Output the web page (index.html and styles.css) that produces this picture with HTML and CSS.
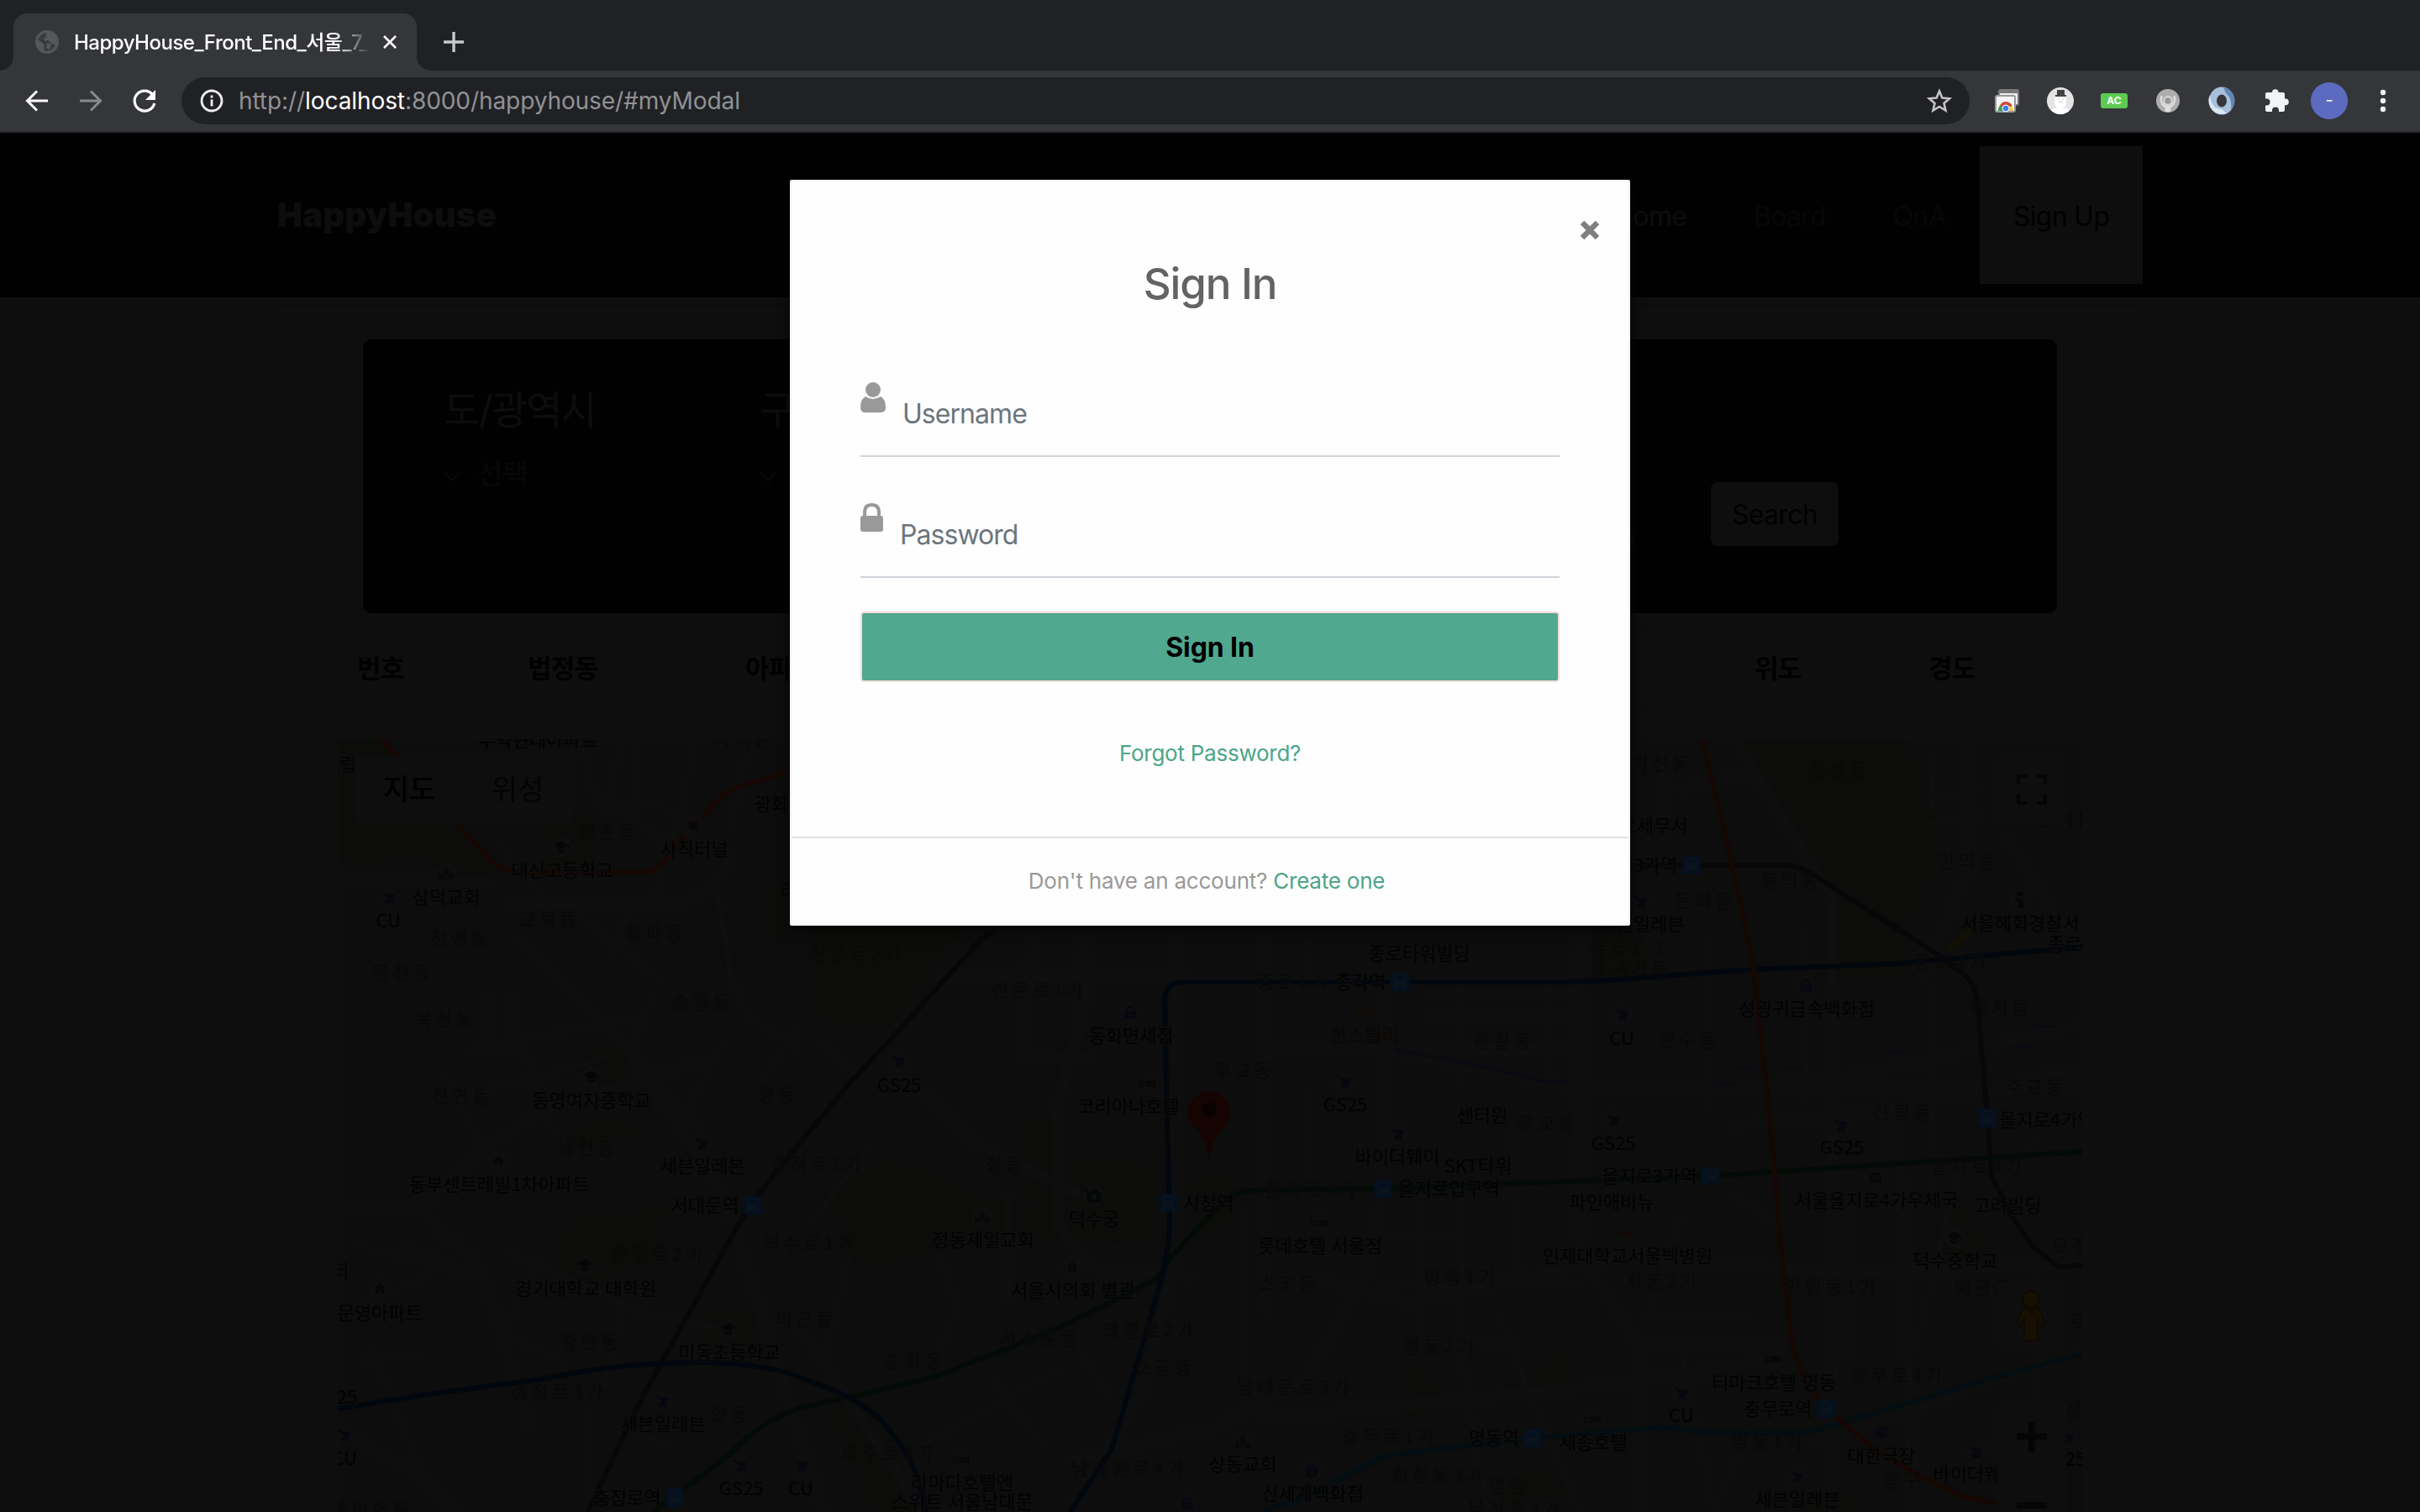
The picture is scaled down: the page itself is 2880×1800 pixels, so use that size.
FILE: index.html
```html
<!DOCTYPE html>
<html lang="ko">
<head>
<meta charset="utf-8">
<title>HappyHouse_Front_End_서울_7</title>
<link rel="stylesheet" href="styles.css">
</head>
<body>
<div class="browser">
  <div class="tabstrip">
    <div class="tab">
      <svg class="globe" viewBox="0 0 28 28"><circle cx="14" cy="14" r="14" fill="#55575b"/><path d="M13 3c-6 1-9 5-9.500 9l4 2 3 3v7c6 2 12-1 13-7l-4-1-4-4-4 1-2-3 4-2z" fill="#38393d"/><path d="M12 7l4-4 5 3-3 4zM14 15l5 1-2 7-4-2z" fill="#55575b"/></svg>
      <span class="tab-title">HappyHouse_Front_End_서울_7_</span>
      <svg class="tab-close" viewBox="0 0 16 16"><path d="M1 1l14 14M15 1L1 15" stroke="#fff" stroke-width="2.600"/></svg>
    </div>
    <svg class="tab-new" viewBox="0 0 24 24"><path d="M12 0v24M0 12h24" stroke="#c6c9cd" stroke-width="3.400"/></svg>
  </div>
  <div class="toolbar">
    <div class="nav-icons">
      <svg viewBox="0 0 32 32"><path d="M29 16H5M16 4.500L4.500 16 16 27.500" fill="none" stroke="#fff" stroke-width="3"/></svg>
      <svg viewBox="0 0 32 32"><path d="M3 16h24M16 4.500L27.500 16 16 27.500" fill="none" stroke="#88898c" stroke-width="3"/></svg>
      <svg viewBox="0 0 32 32"><path d="M25.500 8.500A12 12 0 1 0 27.800 19" fill="none" stroke="#fff" stroke-width="3.200"/><path d="M29 3v12H17z" fill="#fff"/></svg>
    </div>
    <div class="omnibox">
      <svg class="info" viewBox="0 0 28 28"><circle cx="14" cy="14" r="12" fill="none" stroke="#eee" stroke-width="2.800"/><path d="M14 12.500v8M14 7.500v3" stroke="#eee" stroke-width="2.800"/></svg>
      <span class="url">http://<b>localhost</b>:8000/happyhouse/#myModal</span>
      <svg class="star" viewBox="0 0 30 30"><path d="M15 3.500l3.400 8 8.600.8-6.500 5.700 2 8.500L15 22l-7.500 4.500 2-8.500L3 12.300l8.600-.8z" fill="none" stroke="#c4c4c4" stroke-width="2.600"/></svg>
    </div>
    <div class="extensions">
      <svg viewBox="0 0 64 64"><rect x="23" y="19" width="23" height="18" rx="2" fill="#eee" stroke="#777" stroke-width="2"/><rect x="23" y="19" width="23" height="4" fill="#777"/><rect x="19" y="26" width="23" height="19" rx="2" fill="#f4f4f4" stroke="#999" stroke-width="2"/><path d="M22 44a9 9 0 0 1 18 0z" fill="#f6c944"/><path d="M22 44a9 9 0 0 1 4-8l5 8z" fill="#3c9e5a"/><path d="M24 38q2-5 7-5t8 5l-8 2z" fill="#d04a3a"/><circle cx="31" cy="41" r="4" fill="#3f7fea" stroke="#fff"/></svg>
      <svg viewBox="0 0 64 64"><circle cx="32" cy="32" r="16" fill="#e4e4e4"/><path d="M26 27h13v7q0 5-4 6 7 1 7.500 4a16 16 0 0 1-21 0q1-3 7.500-4-4-1-4-6z" fill="#fff"/><path d="M28 19h9v6h2v2H26v-2h2z" fill="#444"/><path d="M29 30h2m3 0h2m-6 3q2.500 2 5 0" stroke="#ccc" fill="none"/></svg>
      <span class="ext-ac">AC</span>
      <svg viewBox="0 0 64 64"><circle cx="32" cy="32" r="14" fill="#adadad"/><path d="M24.500 26q-2 8 3 12 3 1 4.500 1t4.500-1q5-4 3-12" fill="none" stroke="#dedede" stroke-width="2.500"/><path d="M28 38h8l-1 7h-6z" fill="#dedede"/><path d="M32 26.500l4.500 2.700v5.500L32 37.500l-4.500-2.800v-5.500z" fill="#999" stroke="#dedede" stroke-width="1.600"/></svg>
      <svg viewBox="0 0 64 64"><ellipse cx="32" cy="32" rx="10.500" ry="12" fill="none" stroke="#a6bfdb" stroke-width="9"/><path d="M34 16a16 16 0 0 1 9 27q2-14-6-20z" fill="#5f86b5"/><path d="M18 25q1 16 14 17l6 5a16 16 0 0 1-20-22z" fill="#dbe6f2"/></svg>
      <svg viewBox="0 0 64 64"><path d="M28 22a3.800 3.800 0 0 1 7.600 0v0h5.400a2 2 0 0 1 2 2v5.600h1a3.800 3.800 0 0 1 0 7.600h-1V43a2 2 0 0 1-2 2h-5v-1.500a4 4 0 0 0-8 0V45h-6a2 2 0 0 1-2-2v-5.500h1.500a4 4 0 0 0 0-8H20V24a2 2 0 0 1 2-2z" fill="#f1f3f4"/></svg>
      <span class="avatar"><i>-</i></span>
      <svg viewBox="0 0 64 64"><g fill="#f1f3f4"><circle cx="32" cy="22" r="3.200"/><circle cx="32" cy="32" r="3.200"/><circle cx="32" cy="42" r="3.200"/></g></svg>
    </div>
  </div>
</div>

<main class="page">
  <header class="navbar">
    <a class="brand">HappyHouse</a>
    <nav class="menu"><a class="on">Home</a><a>Board</a><a>QnA</a><a class="signup">Sign Up</a></nav>
  </header>
  <section class="sheet">
    <form class="finder">
      <div class="field"><h3>도/광역시</h3><p><svg viewBox="0 0 20 12"><path d="M1 1l9 9 9-9" fill="none" stroke="#090909" stroke-width="2.500"/></svg><span>선택</span></p></div>
      <div class="field"><h3>구</h3><p><svg viewBox="0 0 20 12"><path d="M1 1l9 9 9-9" fill="none" stroke="#090909" stroke-width="2.500"/></svg><span>선택</span></p></div>
      <span class="knob"></span>
      <span class="search">Search</span>
    </form>
    <div class="thead"><span>번호</span><span>법정동</span><span>아파트</span><span>위도</span><span>경도</span></div>
    <svg class="map" viewBox="402 880 2076 920">
      <defs>
        <g id="train"><rect x="-11" y="-11" width="22" height="22" rx="3" fill="#04101d"/><path d="M-6-6q0-2 3-2h6q3 0 3 2V3q0 2-2 2h-8q-2 0-2-2zM-4 5l-3 4M4 5l3 4" fill="none" stroke="#0c151e" stroke-width="1.500"/><path d="M-5-1H5v5H-5z" fill="#0b131b"/></g>
        <g id="cart"><circle r="13" fill="#0e0e0e"/><path d="M-8-6h3l1 2H7L5 2h-7l-1 3H6" fill="#07080f" stroke="#07080f" stroke-width="1.500"/><circle cx="-2" cy="6" r="1.500" fill="#07080f"/><circle cx="4" cy="6" r="1.500" fill="#07080f"/></g>
        <g id="cap"><circle r="13" fill="#0e0e0e"/><path d="M0-7l9 5-9 5-9-5zM-5 2l5 3 5-3v3l-5 3-5-3zM8-2h1.500v7H8z" fill="#060606"/></g>
        <g id="church"><circle r="13" fill="#0e0e0e"/><path d="M-9 7V1q2.500-3 5 0v6zM4 7V1q2.500-3 5 0v6zM-3-3q3-7 6 0V7H1V2H-1v5h-2z" fill="#0a0707"/></g>
        <g id="home"><circle r="13" fill="#0e0e0e"/><path d="M0-6l7 6H5v6H1V2H-1v4h-4V0h-2z" fill="#080606"/></g>
        <g id="bag"><circle r="13" fill="#0e0e0e"/><path d="M-7-2H7V7H-7z" fill="#07080f"/><path d="M-4-2q0-5 4-5t4 5" fill="none" stroke="#07080f" stroke-width="1.800"/><path d="M-3 1q3 4 6 0" fill="none" stroke="#0f0f0f" stroke-width="1.500"/></g>
        <g id="bed"><circle r="13" fill="#0e0e0e"/><path d="M-9-6v11M-9 3H9V-3H-1v6M9 5V0" fill="#0a0806" stroke="#0a0806" stroke-width="1.800"/><circle cx="-5" cy="-2" r="2" fill="#0a0806"/></g>
      </defs>
      <rect x="402" y="880" width="2076" height="920" fill="#0d0d0d"/>
      <g class="park">
        <path d="M402 880h54l130 160-10 35-84-60-50 20-40-10z"/><path d="M650 965h30l35 10-10 50-60 15z"/><path d="M845 1070l30 30 5 90-20-40zM910 1060l30-20v120l-20-30z"/>
        <path d="M678 1265l60-35 30 45-40 30zM675 1345l60-20 30 28-80 12zM677 1447l120-10-10 60-90 30-40-10z"/><path d="M835 1560h65l-10 50h-50z"/>
        <path d="M960 1105h190l-90 120-100-12zM980 1420l80-40 160 60v30l-200 40z"/><path d="M1218 1330h30l30 45 100 10v90l-130 10-25-20zM1262 1228h40l-20 70-40-10zM1409 1410l60-20v60l-40 20zM985 1680l60-10 50 130h-60z"/>
        <path d="M2070 880h195l40 60v100l-25 45-10 80-105 5V1040z"/><path d="M2305 1450l40-15 20 60h-70zM1660 1635l45-10 10 55-40 10zM1795 1650l70-50 10 50-60 15zM1820 1740l60 40-100 10zM1895 1105h60v60h-60z"/>
        <path d="M2120 1800l80-30 20 30zM2460 1750h18v50h-18z"/>
      </g>
      <g class="road thick">
        <path d="M620 1120L740 1240 860 1420 980 1800M950 1580L1100 1800M402 1050h180M610 1075h200q50-20 60-60M1120 1165h300M1230 1110v70M1290 1110v90l-30 110 0 150 40 50 120 10"/><path d="M402 1440h100l70 70 60 190M510 1430l60-60 80-50 200-60M560 1515l-80-30"/>
        <path d="M1400 1100v400l-40 160-90 140M1505 1110v450M1650 1170l-5 250-20 100-70 120-110 60-170 40M1500 1245l150 5 230 45h598M1880 1110v380l70 110v200M1640 1250h230"/>
        <path d="M2000 940l80-20M2070 890l110 180v700M2010 1300l200-20 268-60M2340 880v160l-50 120M1950 1500l250 15 278-10M2258 1320l20 480M1500 1690l400-40 200-30M402 1700l100 60 40 40"/>
        <path d="M2160 1720l220-80 98-30M2390 1000l88 140M2060 1340l200-20 218-50M1560 1520l110 30 300-60M1100 1300l60 60 120 60M1220 1150v110h80"/>
      </g>
      <g class="road">
        <path d="M690 880l20 80 80 0 40 50M740 880l-20 90M760 880l-10 120M830 880l-30 120M870 990l20-110M590 1000l50 60M700 940l90 60-10 70M690 1090l100 80M750 1080l-20 60M850 1040l20 120 20 50 60 40"/>
        <path d="M580 1180v70h30v-70M560 1250l200-40M570 1300l150-40M620 1240l40 110M530 1280l40 80M420 1480l140 40M410 1560l100-40M430 1620l70-10M440 1600l60 150M500 1440l30 40M640 1500l-40 90 70 30M600 1490l140 60-20 100M750 1560l100 20M700 1680v120M740 1700l60 20"/>
        <path d="M780 1180l-30 70 80 90M860 1240l-40 80M900 1300l50-80M980 1240l40 40M1030 1370l-60 80M1120 1500l20 60-30 60M1200 1420v130M1010 1500l-30 120M1280 1600l40 60M1180 1640l60 80M1100 1720l160-90"/>
        <path d="M1560 1120v40M1740 1170v120M1845 1170v120M1700 1180h180M1700 1210h180M1740 1420v200l30 180M1690 1420v180M1640 1530h240M1640 1470h100M1800 1330v90l10 100M1560 1300v110M1480 1440v200M1780 1560l100 240M1690 1600h120"/>
        <path d="M1980 900v100M2030 1120v200M2150 1110v200M2240 1290v120M2300 1180v240M2300 900v60M2300 950l60-10M2300 980l60-10M2400 900l40 60M2000 1450l-40 120M2060 1420l60 40M2000 1600l40 200M1950 1600h180M1960 1570h120M1960 1640h130M2200 1420v200M2330 1400l-50 200M2420 1500v180M2400 1680l-60 70M2080 1700l-30 80M2360 1440l60-80"/>
      </g>
      <g class="line">
        <path class="l3" d="M454 880L584 1025Q595 1035 615 1038.500H768Q780 1038 792 1024L815 994M834 974L858 948 870 940 928 922 950 900"/>
        <path class="l5" d="M699 1800L766 1660 829 1547 879 1457 904 1420 950 1363 1009 1292 1073 1223 1146 1142 1168 1118 1195 1100M1940 1030H2125Q2142 1030 2168 1048L2304 1135 2340 1162Q2351 1172 2354 1200L2366 1340 2370 1400 2394 1448 2420 1485 2451 1509 2478 1506"/>
        <path class="l2" d="M777 1800L815 1772 870 1730Q905 1692 950 1677L1110 1640 1202 1604 1261 1580 1343 1540 1377 1522 1393 1497 1443 1444Q1465 1418 1490 1417L1640 1415 1850 1407 2036 1400 2200 1389 2478 1371"/>
        <path class="l1" d="M402 1677L508 1660 650 1641Q735 1624 793 1623 910 1618 960 1643 1040 1670 1062 1708 1090 1735 1102 1800M1273 1800L1323 1725 1368 1573 1384 1515Q1393 1475 1392 1448L1389 1341 1386 1189Q1388 1168 1411 1169L1860 1169Q1920 1168 1990 1161L2090 1154 2260 1147 2478 1127"/>
        <path class="l4" d="M1500 1800L1553 1783 1643 1736Q1655 1731 1670 1730L1824 1712 1977 1699Q2000 1701 2025 1706H2150L2372 1640 2478 1612"/>
        <path class="l3" d="M2026 880L2060 1025 2085 1140 2091 1190 2107 1340 2120 1490 2133 1600 2150 1650 2183 1685 2230 1725 2290 1760 2337 1782 2378 1789"/>
        <path d="M2318 1132L2345 1108" stroke="#121004" stroke-width="10"/>
      </g>
      <g class="lane"><path d="M1660 1250q110 18 180 38h26"/><path d="M2067 1271h24M2120 1272h24M2246 1253h26M2422 1222h26M2396 1246h26M2040 1291h26"/></g>
      <g class="area">
        <text x="724" y="998">행촌동</text><text x="548" y="1125">천연동</text><text x="654" y="1102">교북동</text><text x="780" y="1118">홍파동</text><text x="479" y="1165">영천동</text><text x="530" y="1221">옥천동</text><text x="836" y="1201">송월동</text><text x="550" y="1313">천연동</text><text x="926" y="1311">평동</text><text x="886" y="888">사직동</text>
        <text x="699" y="1374">냉천동</text><text x="973" y="1394">충정로1가</text><text x="964" y="1488">의주로1가</text><text x="784" y="1501">충정로2가</text><text x="959" y="1578">미근동</text><text x="703" y="1605">충현동</text><text x="665" y="1665">충정로3가</text><text x="869" y="1691">합동</text><text x="443" y="1805">북아현동</text>
        <text x="1020" y="1144">신문로2가</text><text x="1237" y="1186">신문로1가</text><text x="1481" y="1282">무교동</text><text x="1197" y="1394">정동</text><text x="1238" y="1601">서소문동</text><text x="1368" y="1592">태평로2가</text><text x="1089" y="1628">순화동</text><text x="1386" y="1636">소공동</text><text x="1058" y="1738">의주로2가</text><text x="1344" y="1756">남대문로4가</text><text x="1541" y="1659">남대문로3가</text>
        <text x="1540" y="1177">종로1가</text><text x="1789" y="1247">관철동</text><text x="1842" y="1345">장교동</text><text x="1561" y="1424">을지로1가</text><text x="1534" y="1536">소공동</text><text x="1739" y="1528">명동1가</text><text x="1979" y="1534">저동2가</text><text x="1714" y="1611">명동2가</text><text x="1654" y="1718">충무로1가</text><text x="1713" y="1764">회현동3가</text><text x="1796" y="1776">명동</text><text x="1804" y="1804">남산동2가</text><text x="1943" y="1138">종로1.2.</text><text x="1943" y="1161">3.4가동</text><text x="2010" y="1246">관수동</text>
        <text x="1978" y="917">익선동</text><text x="2189" y="925">훈정동</text><text x="2132" y="1056">봉익동</text><text x="2029" y="1080">돈의동</text><text x="2342" y="1033">인의동</text><text x="2323" y="1153">종로4가</text><text x="2382" y="1207">예지동</text><text x="2265" y="1332">산림동</text><text x="2423" y="1302">주교동</text><text x="2354" y="1396">을지로4가</text><text x="2478" y="1491">오장동</text><text x="2180" y="1540">인현동1가</text><text x="2362" y="1541">예관동</text><text x="2259" y="1645">충무로4가</text><text x="2105" y="1725">필동1가</text><text x="2265" y="1770">중구</text><text x="2475" y="1581">로</text><text x="2469" y="1686">정</text><text x="2460" y="983">연지동</text>
      </g>
      <g class="poi">
        <text x="640" y="889">무악현대아파트</text><text x="404" y="918">독립</text><text x="826" y="1019">사직터널</text><text x="928" y="965">광화문</text><text x="669" y="1044">대신고등학교</text><text x="531" y="1076">삼덕교회</text><text x="462" y="1104">CU</text><text x="704" y="1318">동명여자중학교</text><text x="939" y="1068">라</text>
        <text x="594" y="1418">동부센트레빌1차아파트</text><text x="836" y="1396">세븐일레븐</text><text x="839" y="1443">서대문역</text><text x="405" y="1521">터</text><text x="697" y="1542">경기대학교 대학원</text><text x="452" y="1571">문영아파트</text><text x="868" y="1618">미동초등학교</text><text x="413" y="1671">25</text><text x="410" y="1744">CU</text><text x="789" y="1703">세븐일레븐</text><text x="746" y="1791">충정로역</text><text x="882" y="1780">GS25</text><text x="953" y="1780">CU</text>
        <text x="1346" y="1241">동화면세점</text><text x="1070" y="1300">GS25</text><text x="1343" y="1325">코리아나호텔</text><text x="1302" y="1459">덕수궁</text><text x="1438" y="1440">시청역</text><text x="1170" y="1484">정동제일교회</text><text x="1277" y="1544">서울시의회 별관</text><text x="1145" y="1773">라마다호텔앤</text><text x="1145" y="1796">스위트 서울남대문</text><text x="1479" y="1751">상동교회</text>
        <text x="1689" y="1143">종로타워빌딩</text><text x="1619" y="1177">종각역</text><text x="1624" y="1240" class="food">한스델리</text><text x="1930" y="1244">CU</text><text x="1601" y="1323">GS25</text><text x="1764" y="1336">센터원</text><text x="1920" y="1369">GS25</text><text x="1663" y="1385">바이더웨이</text><text x="1759" y="1396">SKT타워</text><text x="1724" y="1423">을지로입구역</text><text x="1963" y="1408">을지로3가역</text><text x="1918" y="1439">파인애비뉴</text><text x="1571" y="1491">롯데호텔 서울점</text><text x="1937" y="1503">인제대학교서울백병원</text><text x="1778" y="1720">명동역</text><text x="1896" y="1725">세종호텔</text><text x="1562" y="1786">신세계백화점</text><text x="2001" y="1693">CU</text><text x="1954" y="1108">세븐일레븐</text>
        <text x="1958" y="991">종로세무서</text><text x="1950" y="1038">종로3가역</text><text x="2404" y="1107">서울혜화경찰서</text><text x="2457" y="1132">종로</text><text x="2150" y="1209">성광귀금속백화점</text><text x="2436" y="1341">을지로4가역</text><text x="2192" y="1374">GS25</text><text x="2233" y="1437">서울을지로4가우체국</text><text x="2389" y="1443">고려빌딩</text><text x="2327" y="1509">덕수중학교</text><text x="2111" y="1654">티마크호텔 명동</text><text x="2116" y="1685">충무로역</text><text x="2239" y="1741">대한극장</text><text x="2351" y="1763">바이더웨이</text><text x="2139" y="1793">세븐일레븐</text><text x="2470" y="1745">25</text>
      </g>
      <circle cx="825" cy="983" r="13" fill="#0e0e0e"/><rect x="820" y="978" width="10" height="10" fill="#0b0607"/>
      <use href="#cap" x="668" y="1008"/><use href="#cap" x="703" y="1282"/><use href="#cap" x="696" y="1506"/><use href="#cap" x="867" y="1582"/><use href="#cap" x="2326" y="1473"/><use href="#church" x="531" y="1040"/><use href="#church" x="1169" y="1449"/><use href="#church" x="1479" y="1717"/>
      <use href="#cart" x="462" y="1069"/><use href="#cart" x="835" y="1362"/><use href="#cart" x="410" y="1709"/><use href="#cart" x="788" y="1668"/><use href="#cart" x="881" y="1745"/><use href="#cart" x="953" y="1745"/><use href="#cart" x="1069" y="1264"/><use href="#cart" x="1930" y="1208"/><use href="#cart" x="1600" y="1288"/><use href="#cart" x="1920" y="1334"/><use href="#cart" x="1663" y="1350"/><use href="#cart" x="2001" y="1659"/><use href="#cart" x="1952" y="1074"/><use href="#cart" x="2191" y="1340"/><use href="#cart" x="2351" y="1729"/><use href="#cart" x="2138" y="1758"/><use href="#cart" x="2460" y="1712"/>
      <use href="#home" x="593" y="1382"/><use href="#home" x="452" y="1534"/><use href="#home" x="1276" y="1508"/><use href="#bag" x="1345" y="1206"/><use href="#bag" x="1413" y="1790"/><use href="#bag" x="1561" y="1751"/><use href="#bag" x="2149" y="1174"/>
      <use href="#bed" x="1366" y="1290"/><use href="#bed" x="1144" y="1738"/><use href="#bed" x="1570" y="1456"/><use href="#bed" x="1895" y="1690"/><use href="#bed" x="2110" y="1618"/>
      <use href="#train" x="896" y="1435"/><use href="#train" x="803" y="1783"/><use href="#train" x="1390" y="1432"/><use href="#train" x="1666" y="1169"/><use href="#train" x="1646" y="1415"/><use href="#train" x="2036" y="1400"/><use href="#train" x="1824" y="1712"/><use href="#train" x="2013" y="1030"/><use href="#train" x="2365" y="1331"/><use href="#train" x="2173" y="1677"/>
      <circle cx="1301" cy="1424" r="13" fill="#0e0e0e"/><path d="M1294 1420h4l2-3h5l2 3h3v11h-16zM1289 1418h6M1292 1415v6" fill="#050808" stroke="#050808" stroke-width="1.500"/><circle cx="1302" cy="1425" r="3" fill="#0f0f0f"/>
      <path d="M1618 1197v14M1615 1197v5h6v-5M1628 1197q-4 5 0 7v7" fill="none" stroke="#130b03" stroke-width="2.500"/><path d="M1936 1459v18M1927 1468h18" stroke="#150504" stroke-width="2"/><circle cx="2232" cy="1402" r="13" fill="#0e0e0e"/><path d="M2225 1396h14v12h-14z" fill="#080705"/><path d="M2225 1397l7 6 7-6" fill="none" stroke="#0f0f0f" stroke-width="1.500"/><circle cx="2404" cy="1071" r="13" fill="#0e0e0e"/><path d="M2401 1062h6v4h-6zM2407 1069v11h-5l2-6-7-5" fill="#070606" stroke="#070606" stroke-width="1.500"/><path d="M2232 1698h14v14h-14z" fill="#07080f"/><path d="M2235.500 1698v14M2242.500 1698v14" stroke="#0f0f0f" stroke-dasharray="2"/>
      <path d="M1439 1379q-2-18-14-34a25 25 0 1 1 28 0q-12 16-14 34z" fill="#150402"/><circle cx="1439" cy="1321" r="8.500" fill="#0a0101"/>
      <g class="control"><rect x="422" y="900" width="260" height="80" rx="3"/><rect x="2378" y="900" width="80" height="80" rx="3"/><rect x="2378" y="1526" width="80" height="80" rx="3"/><rect x="2378" y="1670" width="80" height="140" rx="3"/></g>
      <path d="M551.500 902v76M2388 1751h60" stroke="#0c0c0c" stroke-width="1.500"/>
      <text class="ctl active" x="487" y="952">지도</text><text class="ctl" x="616" y="952">위성</text>
      <path d="M2402 934v-10h10M2424 924h10v10M2434 946v10h-10M2412 956h-10v-10" fill="none" stroke="#050505" stroke-width="4"/>
      <path d="M2418 1692v36M2400 1710h36M2400 1792h36" stroke="#050505" stroke-width="8"/>
      <path d="M2409 1557h16q5 4 8 20l-3 2-5-9v26h-16v-26l-5 9-3-2q3-16 8-20z" fill="#151001" stroke="#0c0801" stroke-width="1.500"/><circle cx="2417" cy="1547" r="10" fill="#151001" stroke="#0c0801" stroke-width="1.500"/><path d="M2412 1557h10l-5 9z" fill="#150802"/>
    </svg>
  </section>

  <div class="modal">
    <svg class="modal-close" viewBox="0 0 24 24"><path d="M3 3l18 18M21 3L3 21" stroke="#808080" stroke-width="6.500"/></svg>
    <h4>Sign In</h4>
    <div class="entry"><svg class="user" viewBox="0 0 30 36"><ellipse cx="15" cy="9" rx="9" ry="9" fill="#999"/><path d="M6 17q9 6 18 0 6 3 6 13 0 6-6 6H6q-6 0-6-6 0-10 6-13z" fill="#999"/></svg><span>Username</span></div>
    <div class="entry second"><svg class="lock" viewBox="0 0 27 34"><path d="M5 17v-6q0-9 8.500-9t8.500 9v6" fill="none" stroke="#999" stroke-width="4"/><rect y="15" width="27" height="19" rx="3" fill="#999"/></svg><span>Password</span></div>
    <div class="submit">Sign In</div>
    <a class="forgot">Forgot Password?</a>
    <footer>Don't have an account? <a>Create one</a></footer>
  </div>
</main>
</body>
</html>
```

FILE: styles.css
```css
* { box-sizing: border-box; }
body { margin: 0; width: 2880px; height: 1800px; overflow: hidden; background: #0e0e0e; font-family: Inter, "Noto Sans CJK KR", sans-serif; }
svg { display: block; flex: none; }
h3, h4, p { margin: 0; font-weight: 400; }

/* browser frame */
.browser { height: 158px; background: #35363a; border-bottom: 2px solid #28292b; }
.tabstrip { height: 84px; background: #202124; display: flex; padding: 16px 0 0 16px; }
.tab { position: relative; width: 480px; height: 68px; background: #35363a; border-radius: 16px 16px 0 0; display: flex; align-items: center; padding-left: 26px; }
.tab::before, .tab::after { content: ""; position: absolute; bottom: 0; width: 16px; height: 16px; }
.tab::before { left: -16px; background: radial-gradient(circle at 0 0, #202124 15.500px, #35363a 16px); }
.tab::after { right: -16px; background: radial-gradient(circle at 100% 0, #202124 15.500px, #35363a 16px); }
.globe { width: 28px; height: 28px; }
.tab-title { width: 354px; margin: -3px 0 0 18px; color: #fff; font-size: 24px; font-weight: 500; letter-spacing: -.5px; white-space: nowrap; overflow: hidden; -webkit-mask-image: linear-gradient(90deg, #000 310px, transparent 352px); mask-image: linear-gradient(90deg, #000 310px, transparent 352px); }
.tab-close { width: 16px; height: 16px; margin-left: 14px; }
.tab-new { width: 24px; height: 24px; margin: 22px 0 0 32px; }
.toolbar { height: 72px; display: flex; align-items: center; padding: 0 12px 0 28px; }
.nav-icons { display: flex; gap: 32px; }
.nav-icons svg { width: 32px; height: 32px; }
.omnibox { flex: 1; height: 56px; margin: 0 12px 0 28px; border-radius: 28px; background: #202124; display: flex; align-items: center; padding: 0 21px 0 22px; }
.info { width: 28px; height: 28px; }
.url { flex: 1; margin-left: 18px; font-size: 28px; letter-spacing: -.08px; color: #919295; }
.url b { font-weight: 400; color: #fff; }
.star { width: 30px; height: 30px; }
.extensions { display: flex; align-items: center; }
.extensions svg { width: 64px; height: 64px; }
.ext-ac { width: 32px; height: 18px; margin: 0 16px; border-radius: 3px; background: #5dcb51; color: #fff; font-size: 12px; font-weight: 700; line-height: 18px; text-align: center; }
.avatar { width: 44px; height: 44px; margin: 0 10px; border-radius: 50%; background: #5c6bc0; color: #fff; font-size: 20px; line-height: 42px; text-align: center; }
.avatar i { font-style: normal; }

/* page under the backdrop */
.page { position: relative; height: 1642px; overflow: hidden; }
.navbar { height: 196px; background: #010101; padding: 0 330px 0 330px; display: flex; justify-content: space-between; }
.brand { color: #0d0d0d; font-size: 40px; font-weight: 900; line-height: 196px; letter-spacing: .2px; }
.menu { display: flex; padding: 16px 0; }
.menu a { padding: 0 40px; color: #070707; font-size: 32px; line-height: 167px; height: 164px; letter-spacing: -.75px; }
.menu .on { color: #0d0d0d; }
.menu .signup { background: #0e0e0e; color: #010101; }
.sheet { width: 2220px; height: 1500px; margin: 8px 0 0 330px; border: 2px solid #0c0c0c; border-radius: 10px; padding: 40px 70px 0; }
.finder { width: 2016px; height: 326px; margin-left: 30px; border-radius: 10px; background: #010101; display: flex; padding: 52px 0 0 96px; }
.field { width: 376px; }
.field h3 { color: #0d0d0d; font-size: 47px; line-height: 64px; letter-spacing: -1.800px; }
.field p { display: flex; align-items: center; gap: 20px; height: 32px; margin-top: 32px; color: #080808; font-size: 33px; }
.field p svg { width: 20px; height: 12px; }
.field p span { line-height: 40px; margin-top: -8px; }
.knob { width: 40px; height: 40px; margin: 167px 90px 0 626px; border-radius: 50%; border: 4px solid #060606; background: #0c0c0c; }
.search { width: 152px; height: 76px; margin-top: 118px; border-radius: 8px; background: #0e0e0e; color: #010101; font-size: 32px; line-height: 77px; text-align: center; letter-spacing: -.7px; }
.thead { width: 2072px; height: 100px; margin-top: 16px; border-top: 2px solid #0c0c0c; border-bottom: 2px solid #0c0c0c; display: grid; grid-template-columns: 203px 259px 1201px 207px 1fr; padding-left: 23px; color: #010101; font-size: 31px; font-weight: 700; line-height: 96px; letter-spacing: -.7px; }
.map { width: 2076px; height: 920px; margin: 34px 0 0 0; }

/* map drawing */
.park { fill: #0c0c0a; }
.road path { fill: none; stroke: #0e0e0e; stroke-width: 7; stroke-linejoin: round; stroke-linecap: round; }
.road.thick path { stroke-width: 14; }
.line path { fill: none; stroke-width: 6; stroke-linejoin: round; }
.line .l1 { stroke: #02070e; }
.line .l2 { stroke: #040b06; }
.line .l3 { stroke: #150804; }
.line .l4 { stroke: #040d11; }
.line .l5 { stroke: #09060a; }
.lane path { fill: none; stroke: #0a0b10; stroke-width: 4; }
.area text { fill: #0a0908; font-size: 22px; font-weight: 500; letter-spacing: 4px; text-anchor: middle; font-family: "Noto Sans CJK KR", sans-serif; }
.poi text { fill: #020202; stroke: #0e0e0e; stroke-opacity: .6; stroke-width: 3px; paint-order: stroke; font-size: 22px; text-anchor: middle; font-family: "Noto Sans CJK KR", sans-serif; }
.poi .food { fill: #0b0704; }
.control { fill: #0e0e0e; }
.ctl { fill: #040404; font-size: 34px; text-anchor: middle; font-family: "Noto Sans CJK KR", sans-serif; }
.ctl.active { fill: #000; font-weight: 500; }

/* sign-in dialog */
.modal { position: absolute; left: 940px; top: 56px; width: 1000px; height: 888px; background: #fefefe; border: 2px solid #f3f3f3; border-radius: 2px; padding: 0 82px; display: flex; flex-direction: column; box-shadow: 0 6px 16px #060606; }
.modal-close { position: absolute; right: 34px; top: 46px; width: 24px; height: 24px; }
.modal h4 { margin-top: 87px; height: 71px; color: #636363; font-size: 51px; font-weight: 500; line-height: 70px; letter-spacing: -1.100px; text-align: center; }
.entry { height: 106px; margin-top: 64px; padding-top: 17px; border-bottom: 2px solid #ced4da; display: flex; color: #6c757d; font-size: 32px; letter-spacing: -.95px; }
.entry.second { margin-top: 38px; }
.entry span { line-height: 40px; margin-top: 18px; }
.user { width: 30px; height: 36px; margin-right: 20px; }
.lock { width: 27px; height: 34px; margin-right: 20px; }
.submit { height: 84px; margin-top: 40px; border: 2px solid #f3ddd9; border-radius: 4px; background: #50a88f; color: #000; font-size: 32px; font-weight: 700; line-height: 82px; letter-spacing: -.1px; text-align: center; }
.forgot { margin-top: 65px; color: #4ca587; font-size: 26px; line-height: 40px; text-align: center; letter-spacing: -.25px; }
footer { margin: 79px -82px 0; border-top: 2px solid #dee2e6; height: 104px; color: #999; font-size: 26px; line-height: 102px; text-align: center; padding-right: 8px; letter-spacing: -.22px; }
footer a { color: #4ca587; }
```
